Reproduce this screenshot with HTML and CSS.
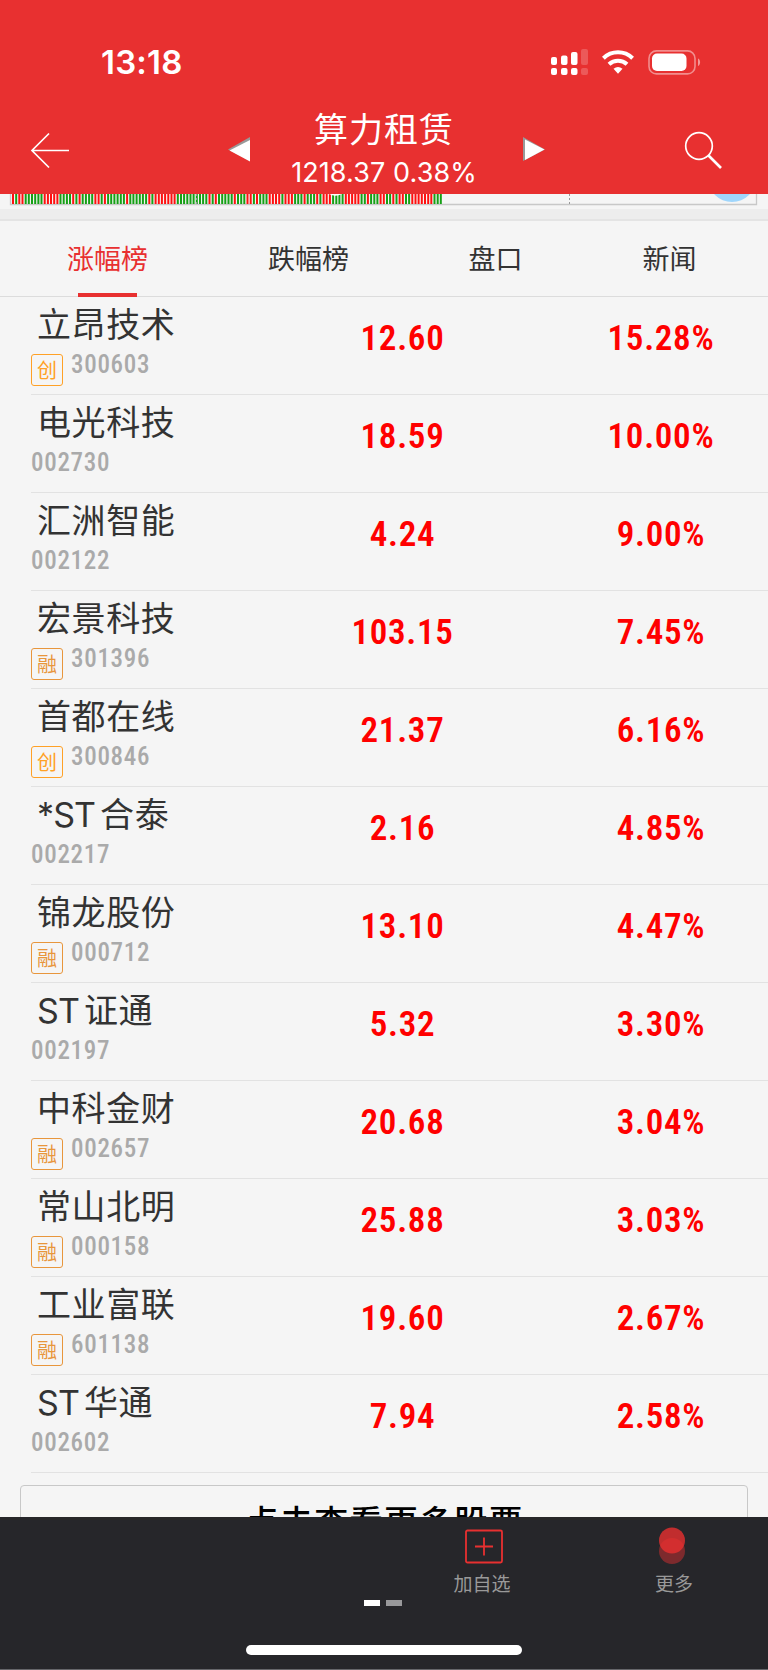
FILE: index.html
```html
<!DOCTYPE html>
<html lang="zh-cn">
	<head>
		<meta charset="utf-8" />
		<title>算力租赁</title>
		<link rel="stylesheet" href="styles.css">
	</head>

	<body>
		<div id="app">
			<header class="header">
				<div class="statusBar">
					<span class="time">13:18</span>
					<svg class="statusIcons" width="152" height="28" viewBox="0 0 152 28">
						<g fill="#fff">
							<rect x="1" y="9" width="6" height="8" rx="2"/>
							<rect x="1" y="20" width="6" height="7" rx="2"/>
							<rect x="11" y="7.500" width="6.500" height="9.500" rx="2"/>
							<rect x="11" y="20" width="6.500" height="7" rx="2"/>
							<rect x="21" y="4" width="6.500" height="13" rx="2"/>
							<rect x="21" y="20" width="6.500" height="7" rx="2"/>
							<rect x="31" y="1" width="7" height="16" rx="2" opacity=".2"/>
							<rect x="31" y="20" width="7" height="7" rx="2" opacity=".2"/>
							<path d="M63.500 20.800a7.400 7.400 0 0 1 9 0l-4.500 5z"/>
						</g>
						<g fill="none" stroke="#fff" stroke-width="4">
							<path d="M53.400 10.200a21 21 0 0 1 29.200 0"/>
							<path d="M59 16.300a13 13 0 0 1 18 0"/>
						</g>
						<rect x="99" y="2.900" width="46" height="23" rx="7.500" fill="none" stroke="#fff" stroke-opacity=".45" stroke-width="1.600"/>
						<rect x="102" y="5.500" width="34.500" height="17.500" rx="5" fill="#fff"/>
						<path d="M148 10.500c2.800 1 2.800 6.500 0 7.500z" fill="#fff" opacity=".5"/>
					</svg>
				</div>
				<div class="navBar">
					<svg class="back" width="42" height="38" viewBox="0 0 42 38" fill="none" stroke="#fff" stroke-width="1.700">
						<path d="M40 18.500H2.500M20 1.500L3 18.500l17 17"/>
					</svg>
					<svg class="prev" width="24" height="26" viewBox="0 0 24 26">
						<path d="M0 12.500L22 0v24z" fill="#999"/>
						<path d="M1.500 13.500L22 3v21.500z" fill="#fff"/>
					</svg>
					<div class="titleBox">
						<h1>算力租赁</h1>
						<p>1218.37 0.38%</p>
					</div>
					<svg class="next" width="24" height="26" viewBox="0 0 24 26">
						<path d="M0 0l22 12.500L0 24z" fill="#999"/>
						<path d="M2 2.500l19.500 10L2 23z" fill="#fff"/>
					</svg>
					<svg class="search" width="40" height="40" viewBox="0 0 40 40" fill="none" stroke="#fff">
						<circle cx="15" cy="15" r="13.300" stroke-width="1.700"/>
						<path d="M24.500 24.500l12.500 12.500" stroke-width="2.600"/>
					</svg>
				</div>
			</header>

			<div class="chart">
				<svg width="768" height="15" viewBox="0 0 768 15">
					<path d="M10.500 0V10.500H756.500V0" fill="none" stroke="#c8c8c8" stroke-width="1.300"/>
					<g id="bars"></g>
					<path d="M196.500 0v12M569.500 0v12" stroke="#999" stroke-dasharray="2 2"/>
					<path d="M329 0h13q-6.500 3.500-13 0z" fill="#fff"/>
					<circle cx="732" cy="-16" r="24" fill="#9fd6fc"/>
				</svg>
			</div>
			<div class="gap"></div>

			<nav class="tabs">
				<a class="active">涨幅榜</a>
				<a>跌幅榜</a>
				<a>盘口</a>
				<a class="news">新闻</a>
			</nav>

			<main class="content">
				<ul class="list" id="list"></ul>
				<div class="more">点击查看更多股票</div>
			</main>

			<footer class="footer">
				<div class="tools">
					<div class="tool">
						<svg class="add" width="38" height="38" viewBox="0 0 38 38" fill="none" stroke="#e83030">
							<rect x="1" y="3.500" width="36" height="32" rx="1.500" stroke-width="1.800"/>
							<path d="M10 19.500h18M19 10.500v18" stroke-width="1.800"/>
						</svg>
						<span>加自选</span>
					</div>
					<div class="tool toolMore">
						<svg width="38" height="38" viewBox="0 0 38 38" fill="#e83030">
							<circle cx="17" cy="24" r="13" opacity=".45"/>
							<circle cx="17" cy="13.500" r="13" opacity=".8"/>
						</svg>
						<span>更多</span>
					</div>
				</div>
				<div class="pager"><i class="on"></i><i></i></div>
				<div class="homeBar"></div>
			</footer>
		</div>

		<script src="main.js"></script>
	</body>
</html>
```

FILE: styles.css
```css
*{
	padding:0;
	margin:0;
	box-sizing: border-box;
	list-style: none;
}
body {
	font-family: "Liberation Sans", "Noto Sans CJK SC", sans-serif;
	background-color: #f5f5f5;
	color: #333;
}
#app {
	width: 768px;
	height: 1670px;
	overflow: hidden;
	display: flex;
	flex-direction: column;
}
.header {
	height: 194px;
	flex: none;
	background-color: #e83030;
	color: #fff;
}
.statusBar {
	height: 106px;
	padding: 48px 66px 0 101px;
	display: flex;
	justify-content: space-between;
}
.time {
	font: 600 33px/29px Inter, sans-serif;
	letter-spacing: .2px;
}
.navBar {
	height: 88px;
	padding-left: 29px;
	display: flex;
}
.back {
	margin-top: 26px;
}
.prev {
	margin: 31px 0 0 157px;
}
.titleBox {
	width: 224px;
	margin-left: 20px;
	text-align: center;
}
.titleBox h1 {
	font: 400 34px/44px "Noto Sans CJK SC", sans-serif;
	letter-spacing: 1px;
}
.titleBox p {
	font: 400 27px/45px Inter, sans-serif;
	letter-spacing: .1px;
}
.next {
	margin: 31px 0 0 27px;
}
.search {
	margin: 25px 0 0 137px;
}
.chart {
	height: 15px;
	flex: none;
	overflow: hidden;
}
.gap {
	height: 12px;
	flex: none;
	background-color: #ededed;
	border-bottom: 2px solid #e4e4e4;
}
.tabs {
	height: 76px;
	flex: none;
	display: flex;
	border-bottom: 1px solid #dcdcdc;
	font: 400 27px/74px "Noto Sans CJK SC", sans-serif;
}
.tabs a {
	flex: 0 0 187px;
	text-align: center;
}
.tabs .active {
	flex-basis: 215px;
	color: #e83030;
}
.tabs .news {
	flex-basis: 161px;
}
.tabs .active::after {
	content: "";
	display: block;
	width: 59px;
	height: 4px;
	margin: -2px auto 0;
	background-color: #e83030;
}
.content {
	height: 1220px;
	flex: none;
	overflow: hidden;
}
.list li {
	height: 98px;
	margin-left: 31px;
	border-bottom: 1px solid #e2e2e2;
	display: flex;
}
.stock {
	width: 220px;
}
.name {
	padding-left: 6px;
	font: 400 34px/50px Inter, "Noto Sans CJK SC", sans-serif;
	letter-spacing: .6px;
	height: 50px;
	margin-top: 3px;
}
.name .en {
	margin-right: 5px;
	letter-spacing: -.9px;
}
.info {
	display: flex;
	gap: 8px;
	margin-top: 4px;
}
.tag {
	width: 32px;
	height: 32px;
	border: 1px solid #ffa126;
	border-radius: 3px;
	font: 400 20px/30px "Noto Sans CJK SC", sans-serif;
	text-align: center;
	color: #ffa126;
}
.rong {
	border-color: #e8963c;
	color: #e8963c;
}
.code, .price, .rate {
	font-family: Roboto, sans-serif;
	font-stretch: condensed;
}
.code {
	font-size: 25px;
	line-height: 22px;
	letter-spacing: .7px;
	color: #aaa;
	font-weight: 500;
}
.price, .rate {
	font-size: 35px;
	line-height: 84px;
	letter-spacing: .7px;
	font-weight: 580;
	color: #f00;
	text-align: center;
}
.price {
	width: 303px;
}
.rate {
	width: 214px;
}
.more {
	width: 728px;
	height: 80px;
	margin: 12px 0 0 20px;
	border: 1px solid #c8c8c8;
	border-radius: 4px;
	text-align: center;
	font: 500 34px/70px "Noto Sans CJK SC", sans-serif;
	letter-spacing: .9px;
	color: #000;
}
.footer {
	flex: 1;
	background-color: #26262a;
	border-bottom: 1px solid #66666a;
}
.tools {
	height: 82px;
	padding: 10px 0 0 422px;
	display: flex;
}
.tool {
	width: 120px;
	display: flex;
	flex-direction: column;
	align-items: center;
	font: 400 19px/36px "Noto Sans CJK SC", sans-serif;
	color: #999;
}
.tool svg {
	flex: none;
}
.add {
	margin-left: 4px;
}
.toolMore {
	margin-left: 72px;
}
.pager {
	height: 6px;
	margin: 1px 2px 0 0;
	display: flex;
	justify-content: center;
	gap: 6px;
}
.pager i {
	width: 16px;
	background-color: #98989a;
}
.pager .on {
	background-color: #fff;
}
.homeBar {
	width: 276px;
	height: 10px;
	margin: 39px auto 0;
	border-radius: 5px;
	background-color: #fff;
}
```

FILE: main.js
```js
var stocks = [
	["立昂技术","创","300603","12.60","15.28%"],
	["电光科技","","002730","18.59","10.00%"],
	["汇洲智能","","002122","4.24","9.00%"],
	["宏景科技","融","301396","103.15","7.45%"],
	["首都在线","创","300846","21.37","6.16%"],
	["*ST合泰","","002217","2.16","4.85%"],
	["锦龙股份","融","000712","13.10","4.47%"],
	["ST证通","","002197","5.32","3.30%"],
	["中科金财","融","002657","20.68","3.04%"],
	["常山北明","融","000158","25.88","3.03%"],
	["工业富联","融","601138","19.60","2.67%"],
	["ST华通","","002602","7.94","2.58%"]
];

document.getElementById("list").innerHTML = stocks.map(function (s){
	var tag = s[1] ? '<span class="tag' + (s[1] == "融" ? ' rong' : '') + '">' + s[1] + '</span>' : '';
	var name = s[0].replace(/^\*?ST/, '<span class="en">$&</span>');
	return '<li><div class="stock"><div class="name">' + name + '</div>' +
		'<div class="info">' + tag + '<span class="code">' + s[2] + '</span></div></div>' +
		'<div class="price">' + s[3] + '</div><div class="rate">' + s[4] + '</div></li>';
}).join("");

//成交量 r涨 g跌
var volume = "rgrrggggggrrrrrggggrgrggggrrgrggggggrggggggrgr" +
	"rrrrrrggggggggggrgrgggggrgggrrgrgggrrrrgrrrgggrgg" +
	"grgrrrggggrrrrrggrgggrrggrgrrggrrrrrrrggg";

document.getElementById("bars").innerHTML = volume.split("").map(function (v,i){
	var x = 12 + i*431/volume.length;
	var color = v == "r" ? "#ff1010" : "#16a016";
	return '<rect x="' + x.toFixed(1) + '" y="0" width="2" height="10" fill="' + color + '"/>';
}).join("");
```
